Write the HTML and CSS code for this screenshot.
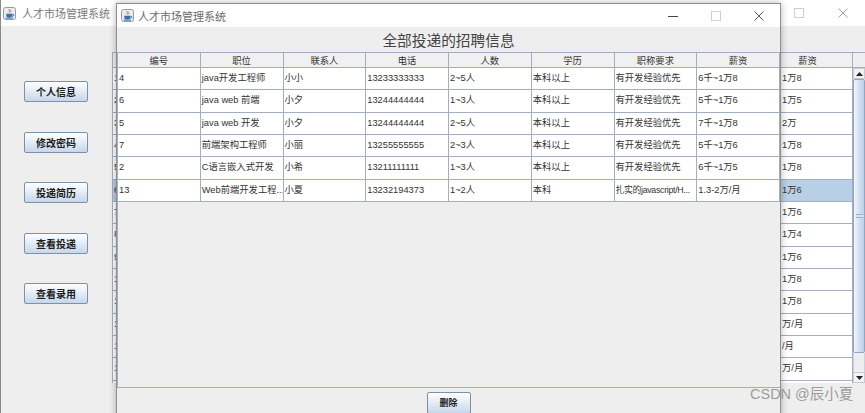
FILE: index.html
```html
<!DOCTYPE html>
<html lang="zh-CN">
<head>
<meta charset="utf-8">
<title>人才市场管理系统</title>
<link rel="stylesheet" href="styles.css">
</head>
<body>
<div class="desk">
  <section class="win outer">
    <header class="titlebar outer-title">
      <svg class="appicon" viewBox="0 0 13 13"><rect x=".5" y=".5" width="12" height="12" rx="2" fill="#e6edf5" stroke="#8a9bb0"/><path d="M6.2 2.2c-1.1 1.2 1 1.8 0 3.3M7.7 2.8c-.8 1 .8 1.4 0 2.5" stroke="#e0731c" fill="none"/><path d="M3.3 6.8h5.8v1.9c0 1.1-1 1.8-2.9 1.8s-2.9-.7-2.9-1.8z" fill="#3d6fa6"/><path d="M9.1 7.3h.8a.9.9 0 0 1 0 1.8h-.9" stroke="#3d6fa6" fill="none"/><path d="M2.6 11.1h7.4" stroke="#3d6fa6"/></svg>
      <span class="ttl">人才市场管理系统</span>
      <span class="ctrls">
        <span class="ctrl"><svg width="10" height="10"><rect x=".5" y=".5" width="9" height="9" fill="none" stroke="#cfcfcf"/></svg></span>
        <span class="ctrl"><svg width="10" height="10"><path d="M.5.5l9 9M9.5.5l-9 9" stroke="#a3a3a3"/></svg></span>
      </span>
    </header>
    <div class="outer-body">
      <nav class="side">
        <button class="jbtn">个人信息</button>
        <button class="jbtn">修改密码</button>
        <button class="jbtn">投递简历</button>
        <button class="jbtn">查看投递</button>
        <button class="jbtn">查看录用</button>
      </nav>
      <div class="bgpane">
        <div class="bg-table">
          <div class="bg-head"><div class="bh"></div><div class="bh">薪资</div></div>
          <div class="bg-rows">
            <div class="bg-row"><div class="bc">1</div><div class="bc sal">1万8</div></div>
            <div class="bg-row"><div class="bc">2</div><div class="bc sal">1万5</div></div>
            <div class="bg-row"><div class="bc">3</div><div class="bc sal">2万</div></div>
            <div class="bg-row"><div class="bc">4</div><div class="bc sal">1万8</div></div>
            <div class="bg-row"><div class="bc">5</div><div class="bc sal">1万8</div></div>
            <div class="bg-row sel"><div class="bc">6</div><div class="bc sal">1万6</div></div>
            <div class="bg-row"><div class="bc">7</div><div class="bc sal">1万6</div></div>
            <div class="bg-row"><div class="bc">8</div><div class="bc sal">1万4</div></div>
            <div class="bg-row"><div class="bc">9</div><div class="bc sal">1万6</div></div>
            <div class="bg-row"><div class="bc">10</div><div class="bc sal">1万8</div></div>
            <div class="bg-row"><div class="bc">11</div><div class="bc sal">1万8</div></div>
            <div class="bg-row"><div class="bc">12</div><div class="bc sal">万/月</div></div>
            <div class="bg-row"><div class="bc">13</div><div class="bc sal">/月</div></div>
            <div class="bg-row"><div class="bc">14</div><div class="bc sal">万/月</div></div>
            <div class="bg-row"><div class="bc"></div><div class="bc sal"></div></div>
          </div>
        </div>
        <div class="vscroll">
          <div class="corner"></div>
          <div class="sbtn"><svg width="7" height="4"><path d="M0 4h7L3.5 0z" fill="#222"/></svg></div>
          <div class="thumb"><span class="grip"></span></div>
          <div class="track"></div>
          <div class="sbtn"><svg width="7" height="4"><path d="M0 0h7L3.5 4z" fill="#222"/></svg></div>
        </div>
      </div>
    </div>
  </section>

  <section class="win dialog">
    <header class="titlebar dlg-title">
      <svg class="appicon" viewBox="0 0 13 13"><rect x=".5" y=".5" width="12" height="12" rx="2" fill="#e6edf5" stroke="#8a9bb0"/><path d="M6.2 2.2c-1.1 1.2 1 1.8 0 3.3M7.7 2.8c-.8 1 .8 1.4 0 2.5" stroke="#e0731c" fill="none"/><path d="M3.3 6.8h5.8v1.9c0 1.1-1 1.8-2.9 1.8s-2.9-.7-2.9-1.8z" fill="#3d6fa6"/><path d="M9.1 7.3h.8a.9.9 0 0 1 0 1.8h-.9" stroke="#3d6fa6" fill="none"/><path d="M2.6 11.1h7.4" stroke="#3d6fa6"/></svg>
      <span class="ttl">人才市场管理系统</span>
      <span class="ctrls">
        <span class="ctrl"><svg width="10" height="10"><path d="M0 5.5h10" stroke="#444"/></svg></span>
        <span class="ctrl"><svg width="10" height="10"><rect x=".5" y=".5" width="9" height="9" fill="none" stroke="#d0d0d0"/></svg></span>
        <span class="ctrl"><svg width="10" height="10"><path d="M.5.5l9 9M9.5.5l-9 9" stroke="#555"/></svg></span>
      </span>
    </header>
    <div class="dlg-body">
      <h1 class="heading">全部投递的招聘信息</h1>
      <div class="pane">
        <div class="thead">
          <div class="th">编号</div><div class="th">职位</div><div class="th">联系人</div><div class="th">电话</div>
          <div class="th">人数</div><div class="th">学历</div><div class="th">职称要求</div><div class="th">薪资</div>
        </div>
        <div class="trow"><div class="td">4</div><div class="td">java开发工程师</div><div class="td">小小</div><div class="td">13233333333</div><div class="td">2~5人</div><div class="td">本科以上</div><div class="td">有开发经验优先</div><div class="td">6千~1万8</div></div>
        <div class="trow"><div class="td">6</div><div class="td">java web 前端</div><div class="td">小夕</div><div class="td">13244444444</div><div class="td">1~3人</div><div class="td">本科以上</div><div class="td">有开发经验优先</div><div class="td">5千~1万6</div></div>
        <div class="trow"><div class="td">5</div><div class="td">java web 开发</div><div class="td">小夕</div><div class="td">13244444444</div><div class="td">2~5人</div><div class="td">本科以上</div><div class="td">有开发经验优先</div><div class="td">7千~1万8</div></div>
        <div class="trow"><div class="td">7</div><div class="td">前端架构工程师</div><div class="td">小丽</div><div class="td">13255555555</div><div class="td">2~3人</div><div class="td">本科以上</div><div class="td">有开发经验优先</div><div class="td">5千~1万6</div></div>
        <div class="trow"><div class="td">2</div><div class="td">C语言嵌入式开发</div><div class="td">小希</div><div class="td">13211111111</div><div class="td">1~3人</div><div class="td">本科以上</div><div class="td">有开发经验优先</div><div class="td">6千~1万5</div></div>
        <div class="trow"><div class="td">13</div><div class="td">Web前端开发工程...</div><div class="td">小夏</div><div class="td">13232194373</div><div class="td">1~2人</div><div class="td">本科</div><div class="td tight">扎实的javascript/H...</div><div class="td">1.3-2万/月</div></div>
      </div>
      <div class="bottom">
        <button class="jbtn del">删除</button>
      </div>
    </div>
  </section>

  <div class="watermark">CSDN @辰小夏</div>
</div>
</body>
</html>
```

FILE: styles.css
```css
* { box-sizing: border-box; margin: 0; padding: 0; }
html, body { width: 865px; height: 413px; overflow: hidden; background: #eeeeee; }
body { font-family: "Liberation Sans", "Noto Sans CJK SC", sans-serif; color: #333; }

.desk { position: relative; width: 865px; height: 413px; overflow: hidden; }

.win { position: absolute; display: flex; flex-direction: column; }

.outer { left: 0; top: 0; width: 865px; height: 413px; background: #eeeeee; border-left: 1px solid #8a8a8a; }

.titlebar { display: flex; align-items: center; background: #ffffff; flex: none; }
.outer-title { height: 26px; padding-left: 2px; }
.appicon { width: 13px; height: 13px; flex: none; }
.ttl { font-family: "Noto Sans CJK SC", sans-serif; font-size: 11px; line-height: 14px; color: #7a7a7a; margin-left: 6px; white-space: nowrap; }
.ctrls { margin-left: auto; display: flex; height: 100%; }
.ctrl { display: flex; align-items: center; justify-content: center; height: 100%; }
.outer .ctrl { width: 44px; }
.dialog .ctrl { width: 43px; }

.outer-body { flex: 1; display: flex; min-height: 0; }

.side { width: 111px; flex: none; display: flex; flex-direction: column; align-items: flex-start; gap: 29.5px; padding: 55px 0 0 23px; }

.jbtn { width: 64px; height: 21px; border: 1px solid #7d91a8; border-radius: 2px;
  background: linear-gradient(#fdfeff, #e6eef7 45%, #c6d6ea);
  font-family: "Noto Sans CJK SC", sans-serif; font-weight: 700; font-size: 10px; line-height: 19px;
  color: #1e1e1e; text-align: center; }

.bgpane { display: flex; align-items: flex-start; padding-top: 26px; }
.bg-table { width: 741px; flex: none; border-left: 1px solid #a3afc0; }
.bg-head { display: grid; grid-template-columns: 650px 90px; height: 16px; }
.bh { background: #f0f0f0; border-top: 1px solid #a3afc0; border-bottom: 1px solid #a3afc0; border-right: 1px solid #a3afc0;
  font-family: "Noto Sans CJK SC", sans-serif; font-size: 9.3px; line-height: 14px; text-align: center; color: #333; }
.bg-rows { height: 315px; overflow: hidden; }
.bg-row { display: grid; grid-template-columns: 650px 90px; height: 22.33px; background: #ffffff; }
.bg-row.sel { background: #b8cfe5; }
.bc { border-right: 1px solid #a3afc0; border-bottom: 1px solid #a3afc0; font-size: 9.3px; line-height: 21px;
  padding-left: 1px; white-space: nowrap; overflow: hidden; color: #333; }
.bc.sal { padding-left: 19px; }

.vscroll { width: 12px; flex: none; display: flex; flex-direction: column; background: #eeeeee; }
.corner { height: 16px; background: #eeeeee; border-top: 1px solid #a3afc0; border-bottom: 1px solid #a3afc0; }
.sbtn { height: 11px; display: flex; align-items: center; justify-content: center; background: #f3f3f3; border: 1px solid #c4ccd6; }
.thumb { height: 274px; display: flex; align-items: center; justify-content: center;
  border: 1px solid #8ea6c4; border-radius: 2px; background: linear-gradient(90deg, #f2f6fb, #d3e1f1 50%, #bcd0e8); }
.grip { width: 7px; height: 4px; border-top: 1px solid #98aecb; border-bottom: 1px solid #98aecb; background: #d6e2f0; }
.track { height: 19px; background: #eeeeee; border-left: 1px solid #c8d3e0; border-right: 1px solid #c8d3e0; }

.dialog { left: 116px; top: 3px; width: 665px; height: 430px; background: #eeeeee;
  border: 1px solid #8e8e8e; border-bottom: none; box-shadow: 0 0 7px rgba(0, 0, 0, 0.3); }
.dlg-title { height: 23px; padding-left: 4px; }
.dlg-title .ttl { margin-left: 4px; color: #6a6a6a; }
.dlg-body { flex: 1; display: flex; flex-direction: column; min-height: 0; }

.heading { height: 25px; line-height: 25px; text-align: center; font-family: "Noto Sans CJK SC", sans-serif;
  font-weight: 400; font-size: 14.7px; color: #444; }

.pane { height: 336px; flex: none; background: #eeeeee; border-left: 1px solid #a3afc0; border-bottom: 1px solid #a3afc0;
  display: flex; flex-direction: column; }
.thead, .trow { display: grid; grid-template-columns: repeat(8, 1fr); }
.thead { height: 16px; flex: none; }
.th { background: #f0f0f0; border-top: 1px solid #a3afc0; border-bottom: 1px solid #a3afc0; border-right: 1px solid #a3afc0;
  font-family: "Noto Sans CJK SC", sans-serif; font-size: 9.3px; line-height: 14px; text-align: center; color: #333; }
.trow { height: 22.33px; flex: none; background: #ffffff; }
.td { border-right: 1px solid #a3afc0; border-bottom: 1px solid #a3afc0; font-size: 9.3px; line-height: 21px;
  padding-left: 1px; white-space: nowrap; overflow: hidden; color: #333; }
.td.tight { font-size: 8.8px; letter-spacing: -0.3px; }

.bottom { display: flex; justify-content: center; padding-top: 4px; }
.jbtn.del { width: 44px; height: 22px; font-size: 9px; line-height: 20px; }

.watermark { position: absolute; left: 750px; top: 386px; font-family: "Liberation Sans", "Noto Sans CJK SC", sans-serif;
  font-size: 14.5px; line-height: 17px; color: rgba(140, 140, 140, 0.85); white-space: nowrap; }
```
